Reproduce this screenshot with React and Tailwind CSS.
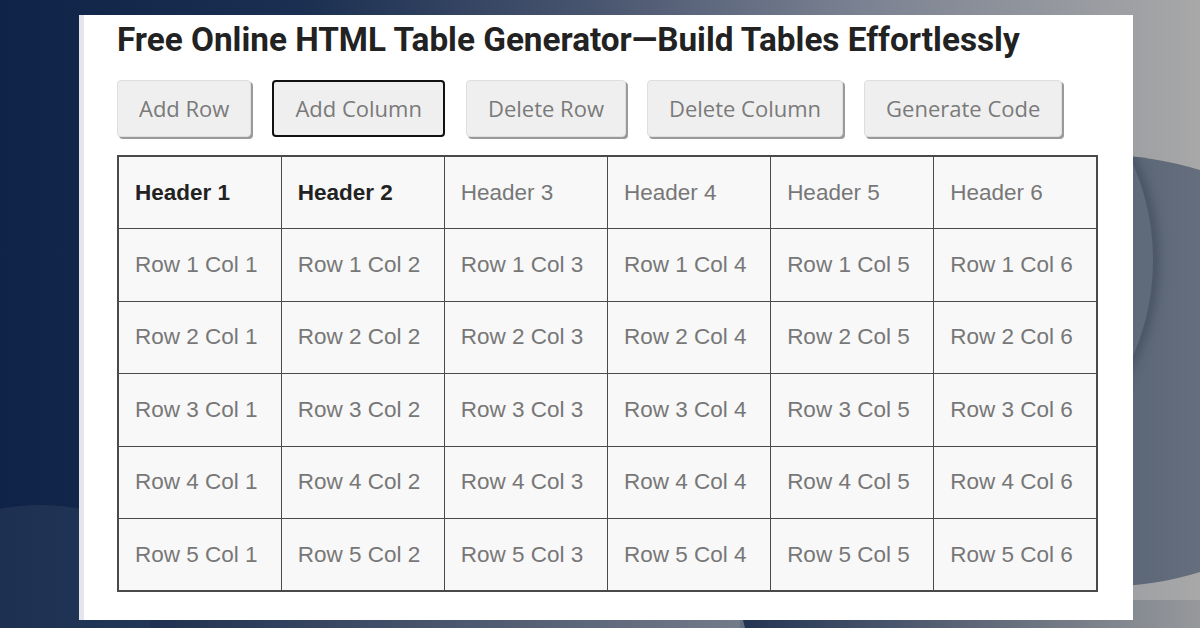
import React from "react";

const buttons = ["Add Row", "Add Column", "Delete Row", "Delete Column", "Generate Code"];

export default function App() {
  const rows = [1, 2, 3, 4, 5];
  const cols = [1, 2, 3, 4, 5, 6];
  return (
    <div className="relative w-[1200px] h-[628px] overflow-hidden pl-[79px] pt-[15px] bg-[linear-gradient(to_right,#0e2347_0%,#1a2f51_25%,#4a5670_50%,#7b8292_72%,#a8a8a8_100%)]">
      {/* background decorations */}
      <div className="absolute left-[-170px] top-[505px] w-[420px] h-[420px] rounded-full bg-[#ffffff10]" />
      <div className="absolute left-[150px] top-[600px] w-[590px] h-[40px] bg-[linear-gradient(to_right,#1f3050,#737b89)]" />
      <div className="absolute left-[738px] top-[600px] w-[520px] h-[40px] bg-[linear-gradient(to_right,#223352,#a5a5a5)] [clip-path:polygon(0_0,100%_0,100%_100%,10px_100%)]" />
      <div className="absolute left-[827px] top-[155px] w-[546px] h-[432px] rounded-[50%] overflow-hidden bg-[linear-gradient(to_right,#56616f_0%,#5b6676_55%,#7c8290_100%)]">
        <div className="absolute left-[-148px] top-[-133px] w-[476px] h-[476px] rounded-full border-r-2 border-r-[#4e5968] bg-[#5f6a7a] shadow-[4px_0_10px_#4a5564]" />
      </div>

      {/* card */}
      <div className="relative w-[1054px] h-[605px] bg-white border-l-[5px] border-l-[#e5e5ee] pl-[33px] flex flex-col">
        <h1 className="mt-[5px] h-[40px] text-[33.3px] leading-[40px] font-bold text-[#222] font-['Roboto',sans-serif] whitespace-nowrap">
          Free Online HTML Table Generator—Build Tables Effortlessly
        </h1>
        <div className="mt-[20px] flex gap-[21px]">
          {buttons.map((b) => (
            <button
              key={b}
              className={
                "h-[57px] px-[21px] bg-[#efefef] text-[#7a7a7a] text-[22px] font-['Open_Sans',sans-serif] rounded-[4px] whitespace-nowrap " +
                (b === "Add Column"
                  ? "border-2 border-[#111] px-[20px]"
                  : "border border-[#dedede] shadow-[2px_2px_0_#9a9a9a]")
              }
            >
              {b}
            </button>
          ))}
        </div>
        <table className="mt-[18px] w-[981px] border-collapse border-2 border-[#4a4a4a] font-['Liberation_Sans',Arial,sans-serif] text-[22.5px] table-fixed">
          <tbody>
            <tr className="h-[72.5px]">
              {cols.map((c) => (
                <td
                  key={c}
                  className={
                    "border-[1.5px] border-[#4a4a4a] bg-[#f8f8f8] pl-[16px] " +
                    (c <= 2 ? "font-bold text-[#222]" : "text-[#777]")
                  }
                >
                  Header {c}
                </td>
              ))}
            </tr>
            {rows.map((r) => (
              <tr key={r} className="h-[72.5px]">
                {cols.map((c) => (
                  <td key={c} className="border-[1.5px] border-[#4a4a4a] bg-[#f8f8f8] pl-[16px] text-[#777] whitespace-nowrap">
                    Row {r} Col {c}
                  </td>
                ))}
              </tr>
            ))}
          </tbody>
        </table>
      </div>
    </div>
  );
}
